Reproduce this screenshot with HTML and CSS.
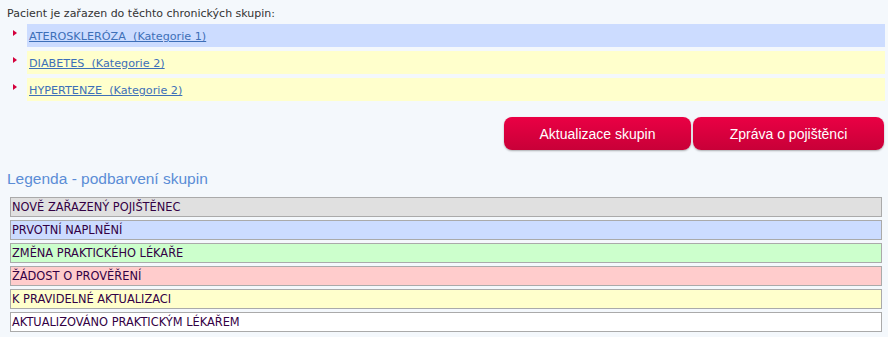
FILE: index.html
```
<html>
    <head>
        <meta charset="UTF-8">
        <title>Chronické skupiny</title>
        <link rel="stylesheet" href="styles.css">
    </head>
    <body>
        <div id="container">
            <p class="intro">Pacient je zařazen do těchto chronických skupin:</p>
            <ul class="groups">
                <li><span class="arrow"></span><div class="group blue"><a href="#">ATEROSKLERÓZA&nbsp; (Kategorie 1)</a></div></li>
                <li><span class="arrow"></span><div class="group yellow"><a href="#">DIABETES&nbsp; (Kategorie 2)</a></div></li>
                <li><span class="arrow"></span><div class="group yellow"><a href="#">HYPERTENZE&nbsp; (Kategorie 2)</a></div></li>
            </ul>
            <div class="buttons">
                <button class="btn" id="update">Aktualizace skupin</button>
                <button class="btn" id="report">Zpráva o pojištěnci</button>
            </div>
            <h2 class="legend-title">Legenda - podbarvení skupin</h2>
            <div class="legend">
                <div class="item grey">NOVĚ ZAŘAZENÝ POJIŠTĚNEC</div>
                <div class="item blue">PRVOTNÍ NAPLNĚNÍ</div>
                <div class="item green">ZMĚNA PRAKTICKÉHO LÉKAŘE</div>
                <div class="item red">ŽÁDOST O PROVĚŘENÍ</div>
                <div class="item yellow">K PRAVIDELNÉ AKTUALIZACI</div>
                <div class="item white">AKTUALIZOVÁNO PRAKTICKÝM LÉKAŘEM</div>
            </div>
        </div>
    </body>
</html>
```
FILE: styles.css
```
body {
    margin: 0;
    background-color: #f4f8fc;
    font-family: Tahoma, "DejaVu Sans", sans-serif;
    font-size: 11px;
    color: #333333;
}
#container {
    padding: 6px 3px 0 7px;
}
.intro {
    margin: 0;
    line-height: 15px;
}
.groups {
    list-style: none;
    margin: 3px 0 0 0;
    padding: 0;
}
.groups li {
    display: flex;
    align-items: flex-start;
    margin-bottom: 4px;
}
.arrow {
    width: 0;
    height: 0;
    margin: 6px 10px 0 6px;
    border-top: 3px solid transparent;
    border-bottom: 3px solid transparent;
    border-left: 4px solid #d4003c;
}
.group {
    flex: 1;
    height: 23px;
    line-height: 25px;
    padding-left: 2px;
}
.group a {
    color: #3d6fb8;
    font-size: 11.2px;
}
.blue {
    background-color: #ccdcff;
}
.yellow {
    background-color: #ffffcc;
}
.grey {
    background-color: #e0e0e0;
}
.green {
    background-color: #ccffcc;
}
.red {
    background-color: #ffcccc;
}
.white {
    background-color: #ffffff;
}
.buttons {
    display: flex;
    justify-content: flex-end;
    gap: 2px;
    margin-top: 16px;
    padding-right: 1px;
}
.btn {
    height: 33px;
    border: none;
    border-radius: 8px;
    background: linear-gradient(#ea0044, #c80038);
    color: white;
    font-family: "Liberation Sans", Arial, sans-serif;
    font-size: 14px;
    box-shadow: 0 1px 2px rgba(0, 0, 0, 0.3);
}
#update {
    width: 187px;
}
#report {
    width: 191px;
}
.legend-title {
    margin: 20px 0 9px 0;
    font-family: "Liberation Sans", Arial, sans-serif;
    font-weight: normal;
    font-size: 15.5px;
    color: #5b8dd6;
}
.legend {
    display: flex;
    flex-direction: column;
    gap: 3px;
    margin-left: 3px;
    margin-right: 3px;
}
.legend .item {
    height: 18px;
    line-height: 19px;
    border: 1px solid #aaaaaa;
    padding-left: 1px;
    font-size: 11.4px;
    color: #330044;
}
```
